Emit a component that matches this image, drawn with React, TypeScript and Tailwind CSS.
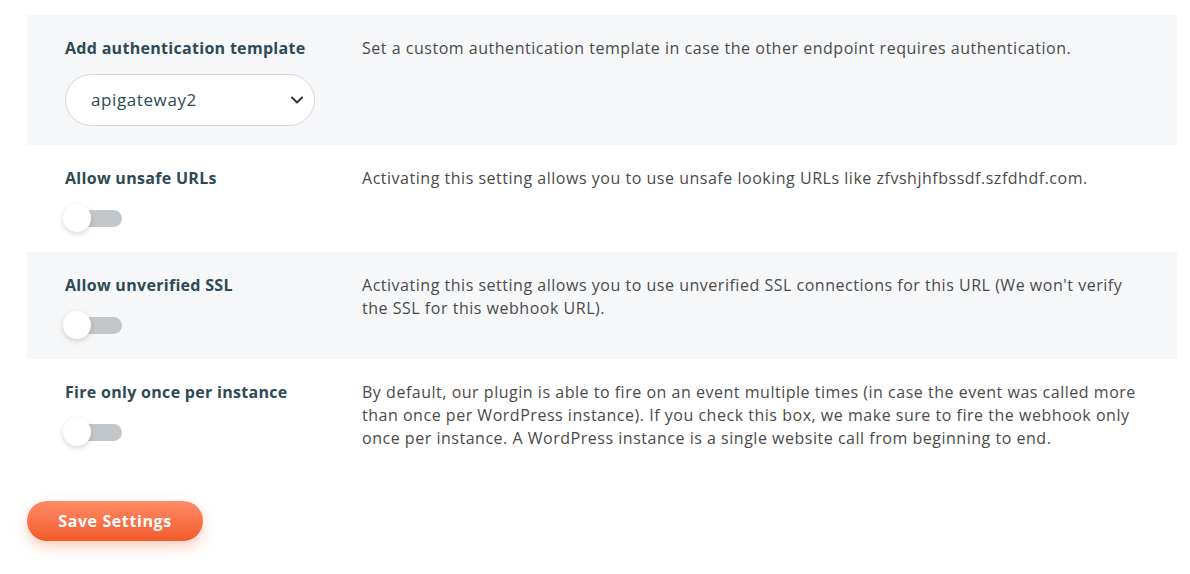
import { useState } from 'react'

type Setting = {
  id: string
  label: string
  description: string
  kind: 'select' | 'toggle'
}

const settings: Setting[] = [
  {
    id: 'auth',
    label: 'Add authentication template',
    description:
      'Set a custom authentication template in case the other endpoint requires authentication.',
    kind: 'select',
  },
  {
    id: 'unsafe',
    label: 'Allow unsafe URLs',
    description:
      'Activating this setting allows you to use unsafe looking URLs like zfvshjhfbssdf.szfdhdf.com.',
    kind: 'toggle',
  },
  {
    id: 'ssl',
    label: 'Allow unverified SSL',
    description:
      "Activating this setting allows you to use unverified SSL connections for this URL (We won't verify the SSL for this webhook URL).",
    kind: 'toggle',
  },
  {
    id: 'once',
    label: 'Fire only once per instance',
    description:
      'By default, our plugin is able to fire on an event multiple times (in case the event was called more than once per WordPress instance). If you check this box, we make sure to fire the webhook only once per instance. A WordPress instance is a single website call from beginning to end.',
    kind: 'toggle',
  },
]

function Toggle() {
  const [on, setOn] = useState(false)
  return (
    <button
      type="button"
      onClick={() => setOn(!on)}
      className="relative -ml-[2px] mt-[14px] block h-[28px] w-[60px]"
    >
      <span
        className={`absolute left-[1px] top-[6px] h-[17px] w-[58px] rounded-full ${on ? 'bg-[#f4622f]' : 'bg-[#c1c7cb]'}`}
      />
      <span
        className={`absolute top-0 h-[28px] w-[28px] rounded-full bg-white shadow-[0_2px_5px_rgba(120,80,60,0.25)] ${on ? 'left-[32px]' : 'left-0'}`}
      />
    </button>
  )
}

function TemplateSelect() {
  return (
    <div className="relative mt-[14px] w-[250px]">
      <select className="block h-[52px] w-full appearance-none rounded-full border border-[#d3d8dd] bg-white pl-[25px] text-[17px] tracking-[0.6px] text-[#2d4a55] outline-none">
        <option>apigateway2</option>
      </select>
      <svg
        className="pointer-events-none absolute right-[11px] top-[21px]"
        width="14"
        height="10"
        viewBox="0 0 14 10"
        fill="none"
      >
        <path d="M2 2.5l5 5 5-5" stroke="#2d3a40" strokeWidth="2" strokeLinecap="round" strokeLinejoin="round" />
      </svg>
    </div>
  )
}

export default function App() {
  return (
    <div className="min-h-[574px] bg-white px-[27px] pt-[15px] font-['Open_Sans',sans-serif] text-[16px]">
      <div className="w-[1150px]">
        {settings.map((s, i) => (
          <div
            key={s.id}
            className={`flex pl-[38px] pt-[22px] ${i % 2 === 0 ? 'bg-[#f6f7f9]' : 'bg-white'} ${s.kind === 'select' ? 'pb-[19px]' : 'h-[107px]'}`}
          >
            <div className="w-[297px] shrink-0">
              <div className="text-[16px] font-bold leading-[23px] tracking-[0.3px] text-[#2d4a55]">{s.label}</div>
              {s.kind === 'select' ? <TemplateSelect /> : <Toggle />}
            </div>
            <p className="w-[785px] text-[16px] leading-[23px] tracking-[0.52px] text-[#4a4a4a]">{s.description}</p>
          </div>
        ))}
      </div>
      <button
        type="button"
        className="mt-[35px] block h-[40px] w-[176px] rounded-full bg-gradient-to-b from-[#ff8a65] to-[#f35a2a] text-[16px] font-bold tracking-[0.6px] text-white shadow-[0_6px_14px_rgba(243,98,47,0.3)]"
      >
        Save Settings
      </button>
    </div>
  )
}
